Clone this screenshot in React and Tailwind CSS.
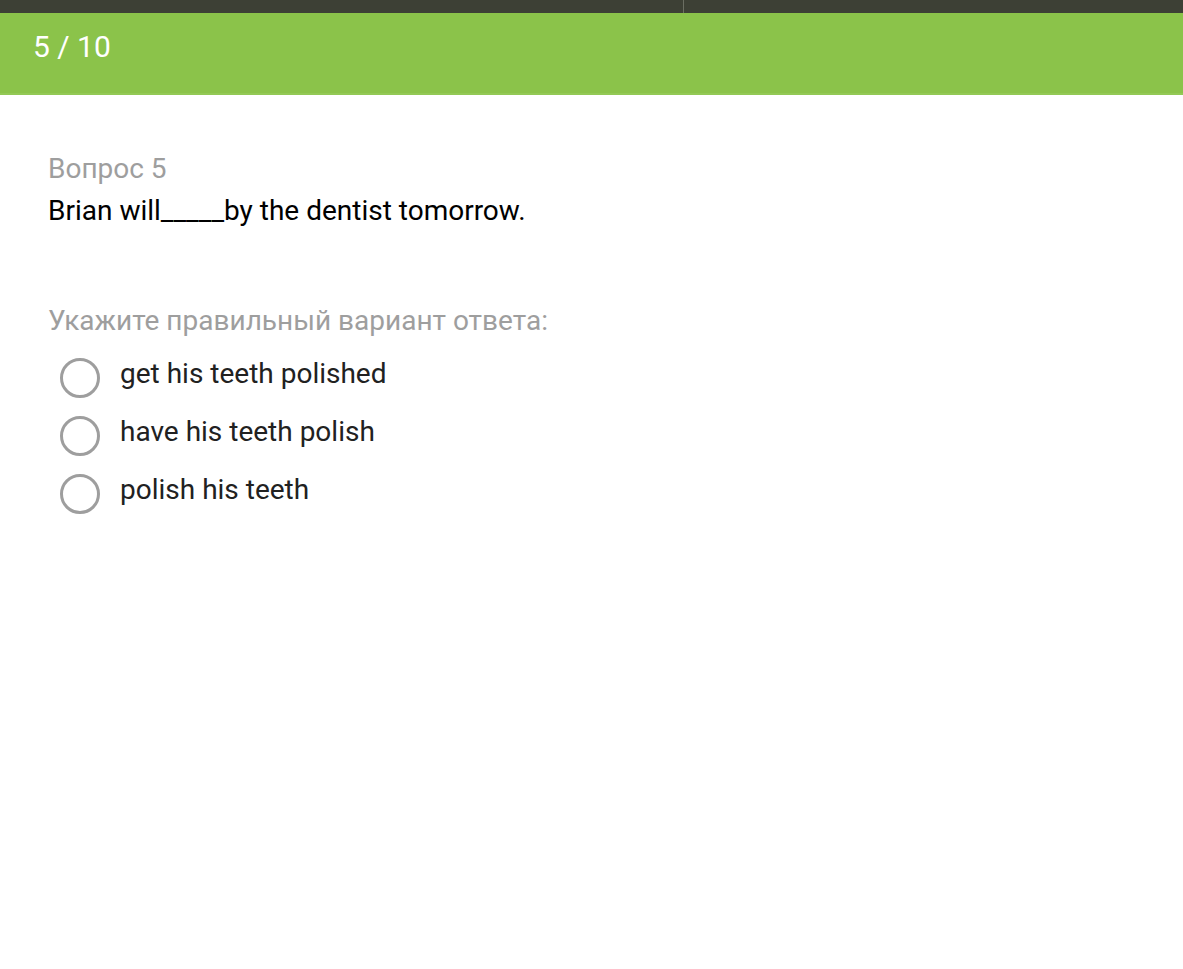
export default function App() {
  const options = ["get his teeth polished", "have his teeth polish", "polish his teeth"];
  return (
    <div className="min-h-[969px] bg-white" style={{ fontFamily: "Roboto, 'Noto Sans', sans-serif" }}>
      <div className="flex h-[13px] bg-[#3d4035]">
        <div className="w-[683px]" />
        <div className="w-px bg-[#6b6e62]" />
      </div>
      <div className="h-[82px] bg-[#8bc34a] border-b-2 border-[#93c955] flex items-start">
        <div className="pl-[33px] pt-[18px] text-[30px] leading-[32px] text-white">5 / 10</div>
      </div>
      <div className="px-[48px] pt-[57px]">
        <div className="text-[28px] leading-[34px] text-[#9e9e9e]">Вопрос 5</div>
        <div className="mt-[8px] text-[28px] leading-[34px] text-black">Brian will_____by the dentist tomorrow.</div>
        <div className="mt-[76px] text-[28px] leading-[34px] text-[#9e9e9e]">Укажите правильный вариант ответа:</div>
        <div className="mt-[7px] flex flex-col">
          {options.map((o) => (
            <div key={o} className="flex items-center h-[58px]">
              <div className="ml-[12px] w-[40px] h-[40px] rounded-full border-[3px] border-[#9e9e9e] mt-[8px]" />
              <div className="ml-[20px] text-[28px] leading-[34px] text-[#212121]">{o}</div>
            </div>
          ))}
        </div>
      </div>
    </div>
  );
}
